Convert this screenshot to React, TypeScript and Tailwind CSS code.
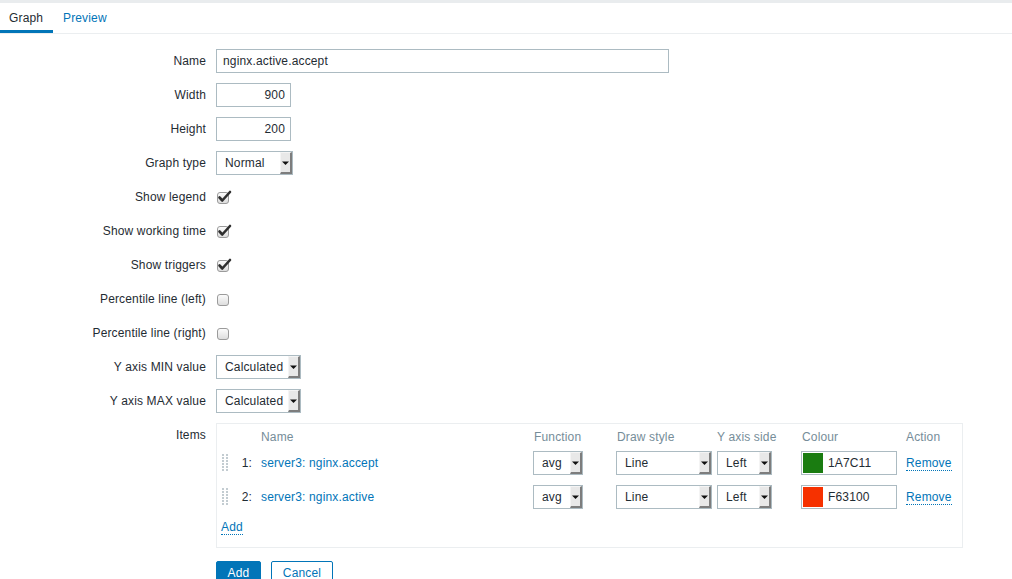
import React from "react";

function Arrow() {
  return (
    <div className="flex h-full w-[12px] shrink-0 items-center justify-center border-b-2 border-r-2 border-l border-t border-b-[#7d7d7d] border-r-[#7d7d7d] border-l-[#f4f4f4] border-t-[#f4f4f4] bg-[#e8e8e8]">
      <svg width="7" height="4" viewBox="0 0 7 4">
        <path d="M0 0.5 L7 0.5 L3.5 4 Z" fill="#111" />
      </svg>
    </div>
  );
}

function Select({ value, className }: { value: string; className: string }) {
  return (
    <div className={"flex h-[24px] items-stretch border border-[#acbbc2] bg-white " + className}>
      <div className="flex flex-1 items-center pl-[8px] text-[#1f2c33]">{value}</div>
      <Arrow />
    </div>
  );
}

function Checkbox({ checked }: { checked: boolean }) {
  return (
    <svg width="18" height="16" viewBox="0 0 18 16" className="ml-[1px]">
      <defs>
        <linearGradient id="cbg" x1="0" y1="0" x2="0" y2="1">
          <stop offset="0" stopColor="#fdfdfd" />
          <stop offset="1" stopColor="#dcdcdc" />
        </linearGradient>
      </defs>
      <rect x="0.5" y="3.5" width="11" height="11" rx="2.5" fill="url(#cbg)" stroke="#9b9b9b" />
      {checked && (
        <path d="M2.5 8.5 L5.3 11.5 L13 3" fill="none" stroke="#2f2f2f" strokeWidth="2.6" strokeLinecap="round" strokeLinejoin="round" />
      )}
    </svg>
  );
}

function Row({ label, children }: { label: string; children: React.ReactNode }) {
  return (
    <div className="flex h-[24px]">
      <div className="mr-[10px] flex w-[206px] shrink-0 items-center justify-end text-[#1f2c33]">{label}</div>
      <div className="flex items-center">{children}</div>
    </div>
  );
}

function Handle() {
  const dots: React.ReactNode[] = [];
  for (let r = 0; r < 6; r++) {
    for (let c = 0; c < 2; c++) {
      dots.push(<rect key={r + "-" + c} x={c * 4} y={r * 3} width="2" height="2" fill="#c3ccd1" />);
    }
  }
  return (
    <svg width="6" height="18" viewBox="0 0 6 18">
      {dots}
    </svg>
  );
}

function ItemRow({ n, name, color, hex }: { n: number; name: string; color: string; hex: string }) {
  return (
    <div className="grid h-[34px] grid-cols-[14px_26px_272px_83px_101px_84px_105px_1fr] items-center">
      <div className="flex items-center pl-[1px]">
        <Handle />
      </div>
      <div className="pr-[9px] text-right text-[#1f2c33]">{n}:</div>
      <div className="text-[#0275b8]">{name}</div>
      <div>
        <Select value="avg" className="w-[50px]" />
      </div>
      <div>
        <Select value="Line" className="w-[96px]" />
      </div>
      <div>
        <Select value="Left" className="w-[55px]" />
      </div>
      <div>
        <div className="flex h-[24px] w-[96px] items-center border border-[#acbbc2] bg-white pl-[1px]">
          <div className={"h-[20px] w-[20px] " + color} />
          <span className="ml-[5px] text-[#1f2c33]">{hex}</span>
        </div>
      </div>
      <div>
        <span className="border-b border-dotted border-[#0275b8] text-[#0275b8]">Remove</span>
      </div>
    </div>
  );
}

export default function App() {
  return (
    <div
      className="h-[579px] w-[1012px] overflow-hidden bg-white text-[12px] leading-[14px] tracking-[0.15px]"
      style={{ fontFamily: '"Liberation Sans", Arial, sans-serif' }}
    >
      <div className="h-[3px] bg-[#e9ecee]" />
      <div className="flex h-[31px] border-b border-[#ebeef0]">
        <div className="flex w-[53px] items-center border-b-[3px] border-[#0275b8] pl-[9px] pt-[2px] text-[#1f2c33]">Graph</div>
        <div className="flex items-center px-[10px] pb-[1px] text-[#0275b8]">Preview</div>
      </div>

      <div className="flex flex-col gap-[10px] pt-[15px]">
        <Row label="Name">
          <div className="flex h-[24px] w-[453px] items-center border border-[#acbbc2] bg-white pl-[6px] text-[#1f2c33]">
            nginx.active.accept
          </div>
        </Row>
        <Row label="Width">
          <div className="flex h-[24px] w-[75px] items-center justify-end border border-[#acbbc2] bg-white pr-[5px] text-[#1f2c33]">
            900
          </div>
        </Row>
        <Row label="Height">
          <div className="flex h-[24px] w-[75px] items-center justify-end border border-[#acbbc2] bg-white pr-[5px] text-[#1f2c33]">
            200
          </div>
        </Row>
        <Row label="Graph type">
          <Select value="Normal" className="w-[77px]" />
        </Row>
        <Row label="Show legend">
          <Checkbox checked />
        </Row>
        <Row label="Show working time">
          <Checkbox checked />
        </Row>
        <Row label="Show triggers">
          <Checkbox checked />
        </Row>
        <Row label="Percentile line (left)">
          <Checkbox checked={false} />
        </Row>
        <Row label="Percentile line (right)">
          <Checkbox checked={false} />
        </Row>
        <Row label="Y axis MIN value">
          <Select value="Calculated" className="w-[85px]" />
        </Row>
        <Row label="Y axis MAX value">
          <Select value="Calculated" className="w-[85px]" />
        </Row>

        <div className="flex">
          <div className="mr-[10px] flex h-[24px] w-[206px] shrink-0 items-center justify-end text-[#1f2c33]">Items</div>
          <div className="w-[747px] border border-[#ebeef0] px-[4px] pb-[4px] pt-[4px]">
            <div className="grid h-[18px] grid-cols-[14px_26px_272px_83px_101px_84px_105px_1fr] items-center pb-[1px] text-[#768d99]">
              <div />
              <div />
              <div>Name</div>
              <div className="pl-[1px]">Function</div>
              <div className="pl-[1px]">Draw style</div>
              <div>Y axis side</div>
              <div className="pl-[1px]">Colour</div>
              <div>Action</div>
            </div>
            <ItemRow n={1} name="server3: nginx.accept" color="bg-[#1a7c11]" hex="1A7C11" />
            <ItemRow n={2} name="server3: nginx.active" color="bg-[#f63100]" hex="F63100" />
            <div className="pb-[9px] pt-[6px]">
              <span className="border-b border-dotted border-[#0275b8] text-[#0275b8]">Add</span>
            </div>
          </div>
        </div>

        <div className="mt-[3px] flex gap-[10px] pl-[216px]">
          <div className="flex h-[24px] w-[45px] items-center justify-center rounded-[2px] border border-[#0275b8] bg-[#0275b8] text-white">
            Add
          </div>
          <div className="flex h-[24px] w-[62px] items-center justify-center rounded-[2px] border border-[#0275b8] bg-white text-[#0275b8]">
            Cancel
          </div>
        </div>
      </div>
    </div>
  );
}
